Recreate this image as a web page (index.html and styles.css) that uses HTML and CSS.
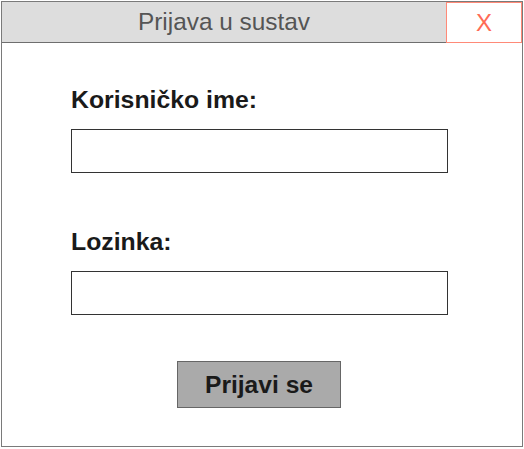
FILE: index.html
```html
<!DOCTYPE html>
<html lang="hr">
<head>
<meta charset="utf-8">
<title>Prijava u sustav</title>
<link rel="stylesheet" href="styles.css">
</head>
<body>
<div class="window">
  <div class="titlebar">
    <div class="title">Prijava u sustav</div>
    <div class="close">X</div>
  </div>
  <div class="content">
    <form class="form">
      <label class="label" for="user">Korisničko ime:</label>
      <input class="field" id="user" type="text">
      <label class="label label-second" for="pass">Lozinka:</label>
      <input class="field" id="pass" type="password">
      <div class="actions">
        <button class="submit" type="button">Prijavi se</button>
      </div>
    </form>
  </div>
</div>
</body>
</html>
```

FILE: styles.css
```css
html, body {
  margin: 0;
  padding: 0;
  background: #ffffff;
}

body {
  font-family: "Liberation Sans", Arial, sans-serif;
  padding: 1px;
}

.window {
  width: 520px;
  height: 444px;
  border: 1px solid #7a7a7a;
  display: flex;
  flex-direction: column;
  background: #ffffff;
}

.titlebar {
  display: flex;
  height: 40px;
  border-bottom: 1px solid #6e6e6e;
  background: #dddddd;
}

.title {
  flex: 1;
  display: flex;
  align-items: center;
  justify-content: center;
  font-size: 24.4px;
  color: #555555;
}

.close {
  width: 74px;
  display: flex;
  align-items: center;
  justify-content: center;
  background: #ffffff;
  border: 1px solid #ff8a78;
  margin-bottom: -1px;
  font-size: 24px;
  color: #ff6b55;
}

.content {
  flex: 1;
  padding: 43px 0 0 69px;
}

.form {
  width: 377px;
  display: flex;
  flex-direction: column;
  margin: 0;
}

.label {
  font-size: 24.8px;
  line-height: 28px;
  font-weight: bold;
  color: #1a1a1a;
}

.label-second {
  margin-top: 55px;
}

.field {
  margin: 15px 0 0 0;
  height: 44px;
  box-sizing: border-box;
  border: 1px solid #333333;
  padding: 0 8px;
  font-family: "Liberation Sans", Arial, sans-serif;
  font-size: 18px;
  background: #ffffff;
  outline: none;
}

.actions {
  display: flex;
  justify-content: flex-start;
  padding-left: 106px;
  margin-top: 46px;
}

.submit {
  width: 164px;
  height: 47px;
  box-sizing: border-box;
  background: #aaaaaa;
  border: 1px solid #666666;
  border-radius: 0;
  font-family: "Liberation Sans", Arial, sans-serif;
  font-size: 24.6px;
  font-weight: bold;
  color: #1a1a1a;
  padding: 0;
}
```
